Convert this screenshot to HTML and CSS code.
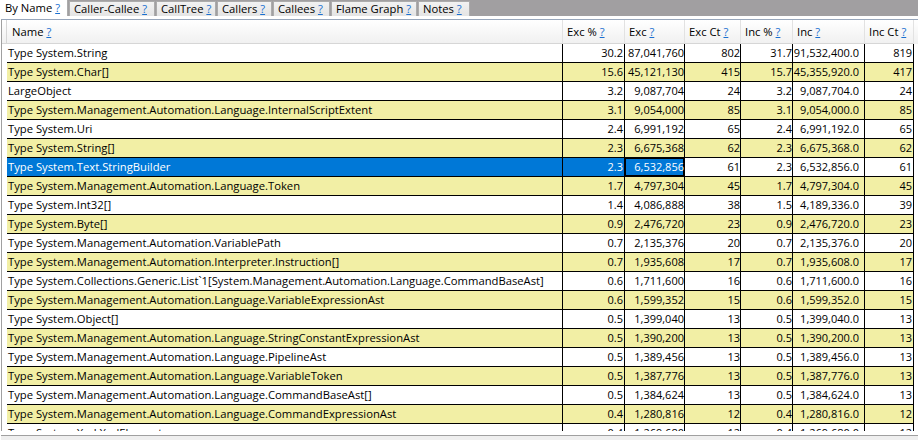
FILE: index.html
```html
<!DOCTYPE html>
<html>
<head>
<meta charset="utf-8">
<link rel="stylesheet" href="styles.css">
</head>
<body>
<div class="tabs">
  <div class="tab sel t1">By Name <a class="q">?</a></div>
  <div class="tab t2">Caller-Callee <a class="q">?</a></div>
  <div class="tab t3">CallTree <a class="q">?</a></div>
  <div class="tab t4">Callers <a class="q">?</a></div>
  <div class="tab t5">Callees <a class="q">?</a></div>
  <div class="tab t6">Flame Graph <a class="q">?</a></div>
  <div class="tab t7">Notes <a class="q">?</a></div>
</div>
<div class="panel">
  <div class="grid">
    <div class="row head">
      <div class="c rh"></div>
      <div class="c name">Name <a class="q">?</a></div>
      <div class="c">Exc % <a class="q">?</a></div>
      <div class="c">Exc <a class="q">?</a></div>
      <div class="c">Exc Ct <a class="q">?</a></div>
      <div class="c">Inc % <a class="q">?</a></div>
      <div class="c">Inc <a class="q">?</a></div>
      <div class="c">Inc Ct <a class="q">?</a></div>
    </div>
    <div class="row"><div class="c rh"></div><div class="c name">Type System.String</div><div class="c n p1">30.2</div><div class="c n exc">87,041,760</div><div class="c n ect">802</div><div class="c n ip">31.7</div><div class="c n inc">91,532,400.0</div><div class="c n ict">819</div></div>
    <div class="row alt"><div class="c rh"></div><div class="c name">Type System.Char[]</div><div class="c n p1">15.6</div><div class="c n exc">45,121,130</div><div class="c n ect">415</div><div class="c n ip">15.7</div><div class="c n inc">45,355,920.0</div><div class="c n ict">417</div></div>
    <div class="row"><div class="c rh"></div><div class="c name">LargeObject</div><div class="c n p1">3.2</div><div class="c n exc">9,087,704</div><div class="c n ect">24</div><div class="c n ip">3.2</div><div class="c n inc">9,087,704.0</div><div class="c n ict">24</div></div>
    <div class="row alt"><div class="c rh"></div><div class="c name">Type System.Management.Automation.Language.InternalScriptExtent</div><div class="c n p1">3.1</div><div class="c n exc">9,054,000</div><div class="c n ect">85</div><div class="c n ip">3.1</div><div class="c n inc">9,054,000.0</div><div class="c n ict">85</div></div>
    <div class="row"><div class="c rh"></div><div class="c name">Type System.Uri</div><div class="c n p1">2.4</div><div class="c n exc">6,991,192</div><div class="c n ect">65</div><div class="c n ip">2.4</div><div class="c n inc">6,991,192.0</div><div class="c n ict">65</div></div>
    <div class="row alt"><div class="c rh"></div><div class="c name">Type System.String[]</div><div class="c n p1">2.3</div><div class="c n exc">6,675,368</div><div class="c n ect">62</div><div class="c n ip">2.3</div><div class="c n inc">6,675,368.0</div><div class="c n ict">62</div></div>
    <div class="row sel"><div class="c rh"></div><div class="c name">Type System.Text.StringBuilder</div><div class="c n p1">2.3</div><div class="c n exc cur">6,532,856</div><div class="c n ect">61</div><div class="c n ip">2.3</div><div class="c n inc">6,532,856.0</div><div class="c n ict">61</div></div>
    <div class="row alt"><div class="c rh"></div><div class="c name">Type System.Management.Automation.Language.Token</div><div class="c n p1">1.7</div><div class="c n exc">4,797,304</div><div class="c n ect">45</div><div class="c n ip">1.7</div><div class="c n inc">4,797,304.0</div><div class="c n ict">45</div></div>
    <div class="row"><div class="c rh"></div><div class="c name">Type System.Int32[]</div><div class="c n p1">1.4</div><div class="c n exc">4,086,888</div><div class="c n ect">38</div><div class="c n ip">1.5</div><div class="c n inc">4,189,336.0</div><div class="c n ict">39</div></div>
    <div class="row alt"><div class="c rh"></div><div class="c name">Type System.Byte[]</div><div class="c n p1">0.9</div><div class="c n exc">2,476,720</div><div class="c n ect">23</div><div class="c n ip">0.9</div><div class="c n inc">2,476,720.0</div><div class="c n ict">23</div></div>
    <div class="row"><div class="c rh"></div><div class="c name">Type System.Management.Automation.VariablePath</div><div class="c n p1">0.7</div><div class="c n exc">2,135,376</div><div class="c n ect">20</div><div class="c n ip">0.7</div><div class="c n inc">2,135,376.0</div><div class="c n ict">20</div></div>
    <div class="row alt"><div class="c rh"></div><div class="c name">Type System.Management.Automation.Interpreter.Instruction[]</div><div class="c n p1">0.7</div><div class="c n exc">1,935,608</div><div class="c n ect">17</div><div class="c n ip">0.7</div><div class="c n inc">1,935,608.0</div><div class="c n ict">17</div></div>
    <div class="row"><div class="c rh"></div><div class="c name">Type System.Collections.Generic.List`1[System.Management.Automation.Language.CommandBaseAst]</div><div class="c n p1">0.6</div><div class="c n exc">1,711,600</div><div class="c n ect">16</div><div class="c n ip">0.6</div><div class="c n inc">1,711,600.0</div><div class="c n ict">16</div></div>
    <div class="row alt"><div class="c rh"></div><div class="c name">Type System.Management.Automation.Language.VariableExpressionAst</div><div class="c n p1">0.6</div><div class="c n exc">1,599,352</div><div class="c n ect">15</div><div class="c n ip">0.6</div><div class="c n inc">1,599,352.0</div><div class="c n ict">15</div></div>
    <div class="row"><div class="c rh"></div><div class="c name">Type System.Object[]</div><div class="c n p1">0.5</div><div class="c n exc">1,399,040</div><div class="c n ect">13</div><div class="c n ip">0.5</div><div class="c n inc">1,399,040.0</div><div class="c n ict">13</div></div>
    <div class="row alt"><div class="c rh"></div><div class="c name">Type System.Management.Automation.Language.StringConstantExpressionAst</div><div class="c n p1">0.5</div><div class="c n exc">1,390,200</div><div class="c n ect">13</div><div class="c n ip">0.5</div><div class="c n inc">1,390,200.0</div><div class="c n ict">13</div></div>
    <div class="row"><div class="c rh"></div><div class="c name">Type System.Management.Automation.Language.PipelineAst</div><div class="c n p1">0.5</div><div class="c n exc">1,389,456</div><div class="c n ect">13</div><div class="c n ip">0.5</div><div class="c n inc">1,389,456.0</div><div class="c n ict">13</div></div>
    <div class="row alt"><div class="c rh"></div><div class="c name">Type System.Management.Automation.Language.VariableToken</div><div class="c n p1">0.5</div><div class="c n exc">1,387,776</div><div class="c n ect">13</div><div class="c n ip">0.5</div><div class="c n inc">1,387,776.0</div><div class="c n ict">13</div></div>
    <div class="row"><div class="c rh"></div><div class="c name">Type System.Management.Automation.Language.CommandBaseAst[]</div><div class="c n p1">0.5</div><div class="c n exc">1,384,624</div><div class="c n ect">13</div><div class="c n ip">0.5</div><div class="c n inc">1,384,624.0</div><div class="c n ict">13</div></div>
    <div class="row alt"><div class="c rh"></div><div class="c name">Type System.Management.Automation.Language.CommandExpressionAst</div><div class="c n p1">0.4</div><div class="c n exc">1,280,816</div><div class="c n ect">12</div><div class="c n ip">0.4</div><div class="c n inc">1,280,816.0</div><div class="c n ict">12</div></div>
    <div class="row"><div class="c rh"></div><div class="c name">Type System.Xml.XmlElement</div><div class="c n p1">0.4</div><div class="c n exc">1,269,680</div><div class="c n ect">12</div><div class="c n ip">0.4</div><div class="c n inc">1,269,680.0</div><div class="c n ict">12</div></div>
  </div>
  <div class="hscroll"></div>
</div>
</body>
</html>
```
FILE: styles.css
```css
html, body {
  margin: 0;
  padding: 0;
}
body {
  width: 918px;
  height: 440px;
  overflow: hidden;
  background: #ffffff;
  color: #000000;
  font-family: "Open Sans", "Noto Sans", sans-serif;
  font-size: 11.25px;
}
.q {
  color: #1a6fd0;
  text-decoration: underline;
}
.tabs {
  display: flex;
  height: 16px;
  background: #a19fa1;
}
.tab {
  box-sizing: border-box;
  height: 15px;
  margin-top: 1px;
  margin-right: 1px;
  border: 1px solid #acacac;
  border-bottom: none;
  background: linear-gradient(#f2f2f2, #e4e4e4);
  padding-left: 4px;
  line-height: 13px;
  white-space: nowrap;
  overflow: hidden;
}
.tab.sel {
  height: 16px;
  margin-top: 0;
  border-left: none;
  border-top: none;
  background: #ffffff;
  padding-left: 5px;
  line-height: 15px;
}
.t1 { width: 68px; }
.t2 { width: 86px; }
.t3 { width: 60px; }
.t4 { width: 55px; }
.t5 { width: 57px; }
.t6 { width: 86px; }
.t7 { width: 52px; }
.panel {
  height: 424px;
  padding: 3px 0 0 1px;
  box-sizing: border-box;
  background: #ffffff;
  display: flex;
  flex-direction: column;
}
.grid {
  height: 411px;
  border-left: 1px solid #a0a0a0;
  border-top: 1px solid #97a6bb;
  overflow: hidden;
  flex: none;
}
.row {
  display: grid;
  grid-template-columns: 5px 556px 62px 60px 56px 52px 72px 49px;
  height: 19px;
  box-sizing: border-box;
  line-height: 18px;
  white-space: nowrap;
}
.c {
  box-sizing: border-box;
  overflow: hidden;
  border-right: 1px solid #000000;
  border-bottom: 1px solid #000000;
}
.rh {
  border: none;
}
.name {
  padding-left: 1px;
}
.n {
  text-align: right;
  font-size: 11px;
}
.p1 { padding-right: 1px; }
.exc { padding-right: 0; }
.ect { padding-right: 0; }
.ip { padding-right: 0; }
.inc { padding-right: 5px; }
.ict { padding-right: 1px; }
.alt .c {
  background: #f2efa5;
}
.alt .rh {
  background: #ffffff;
}
.sel .name,
.sel .p1,
.sel .exc {
  background: #0078d7;
  color: #ffffff;
}
.sel .cur {
  box-shadow: inset 0 0 0 1px #000000;
}
.head {
  height: 24px;
  line-height: 23px;
  background: linear-gradient(#ffffff, #f0f0f0);
}
.head .c {
  border-right: 1px solid #e2e2e2;
  border-bottom: 1px solid #d6d6d6;
  padding-left: 4px;
  padding-top: 1px;
  line-height: 22px;
}
.head .rh {
  border-right: 1px solid #d6d6d6;
  padding-left: 0;
}
.head .name {
  padding-left: 5px;
}
.hscroll {
  flex: 1;
  margin-top: 4px;
  border-top: 1px solid #a0a0a0;
  background: #efefef;
}
```
